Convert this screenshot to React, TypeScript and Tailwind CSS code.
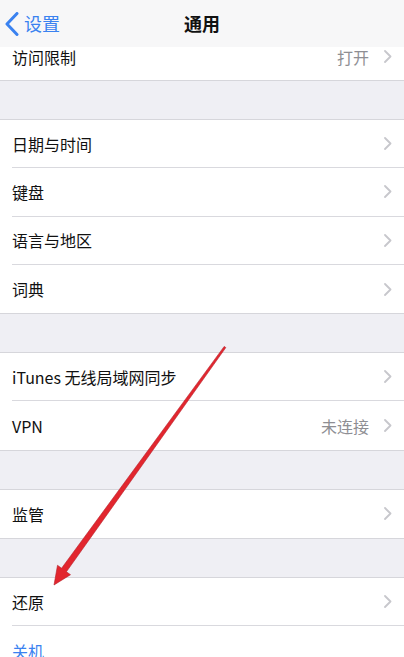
import React from "react";

const Chevron = () => (
  <svg width="8" height="13" viewBox="0 0 8 13" className="shrink-0">
    <path d="M1 1 L6.5 6.5 L1 12" fill="none" stroke="#c7c7cc" strokeWidth="1.8" strokeLinecap="round" strokeLinejoin="round" />
  </svg>
);

type RowProps = { label: string; value?: string; last?: boolean; blue?: boolean; chevron?: boolean };

const Row = ({ label, value, last, blue, chevron = true }: RowProps) => (
  <div className="bg-white pl-3 h-[48.3px]">
    <div className={`h-full flex items-center pr-3 ${last ? "" : "border-b border-[#d9d9de]"}`}>
      <span className={`flex-1 text-[16px] ${blue ? "text-[#3a82f0]" : "text-[#111]"}`}>{label}</span>
      {value && <span className="text-[16px] text-[#8e8e93] mr-[15px]">{value}</span>}
      {chevron && <Chevron />}
    </div>
  </div>
);

const Gap = () => <div className="h-[40px] border-t border-b border-[#d6d6db] bg-[#efeff4]" />;

export default function App() {
  return (
    <div
      className="relative w-[404px] h-[657px] overflow-hidden bg-[#efeff4]"
      style={{ fontFamily: '"Noto Sans CJK SC", "Noto Sans", sans-serif' }}
    >
      {/* header */}
      <div className="h-[47px] bg-[#f7f7f8] flex items-center relative">
        <div className="flex items-center pl-[5px]">
          <svg width="14" height="24" viewBox="0 0 14 24">
            <path d="M12 1.5 L2 12 L12 22.5" fill="none" stroke="#3a82f0" strokeWidth="3" strokeLinecap="round" strokeLinejoin="round" />
          </svg>
          <span className="ml-[5px] text-[18px] text-[#3a82f0]">设置</span>
        </div>
        <div className="absolute left-0 right-0 text-center text-[18px] font-semibold text-[#111] pointer-events-none">通用</div>
      </div>
      {/* partial row */}
      <div className="bg-white pl-3 h-[33px]">
        <div className="h-full flex items-center pr-3 pb-[14px]">
          <span className="flex-1 text-[16px] text-[#111]">访问限制</span>
          <span className="text-[16px] text-[#8e8e93] mr-[15px]">打开</span>
          <Chevron />
        </div>
      </div>
      <Gap />
      <Row label="日期与时间" />
      <Row label="键盘" />
      <Row label="语言与地区" />
      <Row label="词典" last />
      <Gap />
      <Row label="iTunes 无线局域网同步" />
      <Row label="VPN" value="未连接" last />
      <Gap />
      <Row label="监管" last />
      <Gap />
      <Row label="还原" />
      <Row label="关机" blue chevron={false} last />

      {/* red arrow annotation */}
      <svg className="absolute left-0 top-0 pointer-events-none" width="404" height="657" viewBox="0 0 404 657">
        <polygon
          points="225.8,347.6 224.2,346.4 61.6,568.2 57.5,565.3 54,585 70.5,574.7 66.4,571.8"
          fill="#e2262e"
          stroke="#b51f28"
          strokeWidth="0.6"
          strokeLinejoin="round"
        />
      </svg>
    </div>
  );
}
